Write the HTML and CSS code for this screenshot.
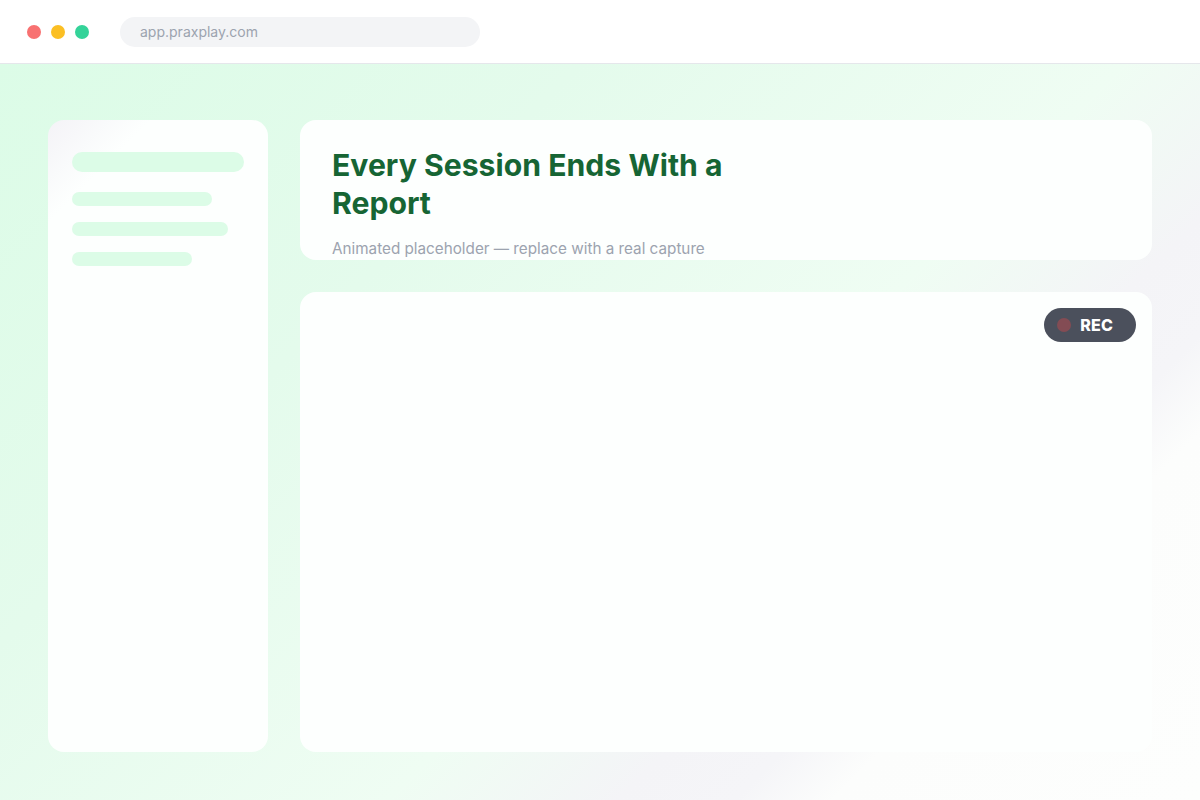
FILE: index.html
```html
<!DOCTYPE html>
<html lang="en">
<head>
<meta charset="utf-8">
<title>Praxplay</title>
<link rel="stylesheet" href="styles.css">
</head>
<body>
  <div class="window">
    <header class="chrome">
      <div class="lights">
        <span class="light red"></span>
        <span class="light yellow"></span>
        <span class="light green"></span>
      </div>
      <div class="address">app.praxplay.com</div>
    </header>

    <main class="stage">
      <aside class="sidebar">
        <div class="skel skel-head"></div>
        <div class="skel skel-line w140"></div>
        <div class="skel skel-line w156"></div>
        <div class="skel skel-line w120"></div>
      </aside>

      <section class="content">
        <div class="card intro">
          <h1 class="title">Every Session Ends With a Report</h1>
          <p class="note">Animated placeholder — replace with a real capture</p>
        </div>
        <div class="card player">
          <div class="rec"><span class="rec-dot"></span><span class="rec-label">REC</span></div>
        </div>
      </section>
    </main>
  </div>
</body>
</html>
```
FILE: styles.css
```css
* { box-sizing: border-box; }

html, body {
  margin: 0;
  height: 100%;
}

body {
  font-family: Inter, "Noto Sans", "Liberation Sans", sans-serif;
  background: #ffffff;
}

.window {
  width: 1200px;
  height: 800px;
  display: flex;
  flex-direction: column;
}

/* browser chrome */
.chrome {
  height: 64px;
  flex: 0 0 64px;
  background: #ffffff;
  border-bottom: 1px solid #e5e7eb;
  display: flex;
  align-items: center;
  padding-left: 27px;
  gap: 31px;
}

.lights {
  display: flex;
  gap: 10px;
}

.light {
  width: 14px;
  height: 14px;
  border-radius: 50%;
}
.light.red { background: #f87171; }
.light.yellow { background: #fbbf24; }
.light.green { background: #34d399; }

.address {
  width: 360px;
  height: 30px;
  border-radius: 15px;
  background: #f3f4f6;
  color: #9ca3af;
  font-size: 14px;
  line-height: 30px;
  padding-left: 20px;
}

/* page area */
.stage {
  flex: 1;
  display: flex;
  gap: 32px;
  padding: 56px 48px 48px;
  background: linear-gradient(135deg,
    #dcfce7 0%,
    #e4fbec 30%,
    #effdf3 58%,
    #f4f4f7 70%,
    #f5f5f8 76%,
    #fcfdfc 81%,
    #fdfefd 100%);
}

.sidebar {
  width: 220px;
  flex: 0 0 220px;
  border-radius: 16px;
  background: linear-gradient(135deg, #f4f3f7 0px, #fdfffe 72px);
  padding: 32px 24px;
  display: flex;
  flex-direction: column;
  gap: 16px;
}

.skel {
  background: #dcfce7;
  border-radius: 10px;
}
.skel-head {
  height: 20px;
  width: 172px;
  margin-bottom: 4px;
}
.skel-line { height: 14px; border-radius: 7px; }
.w140 { width: 140px; }
.w156 { width: 156px; }
.w120 { width: 120px; }

.content {
  flex: 1;
  display: flex;
  flex-direction: column;
  gap: 32px;
}

.card {
  background: #fdfffe;
  border-radius: 16px;
}

.intro {
  height: 140px;
  flex: 0 0 140px;
  padding: 26px 32px 0;
  overflow: hidden;
}

.title {
  margin: 0;
  max-width: 420px;
  font-size: 30.2px;
  line-height: 38px;
  font-weight: 700;
  color: #166534;
}

.note {
  margin: 16px 0 0;
  font-size: 15.25px;
  line-height: 22px;
  color: #9ca3af;
}

.player {
  flex: 1;
  position: relative;
}

.rec {
  position: absolute;
  top: 16px;
  right: 16px;
  height: 34px;
  border-radius: 17px;
  background: #4b505c;
  display: flex;
  align-items: center;
  gap: 9px;
  padding: 0 23px 0 13px;
}

.rec-dot {
  width: 14px;
  height: 14px;
  border-radius: 50%;
  background: #ef4444;
  opacity: 0.35;
}

.rec-label {
  color: #ffffff;
  font-size: 16px;
  font-weight: 800;
  letter-spacing: 0.2px;
}
```
